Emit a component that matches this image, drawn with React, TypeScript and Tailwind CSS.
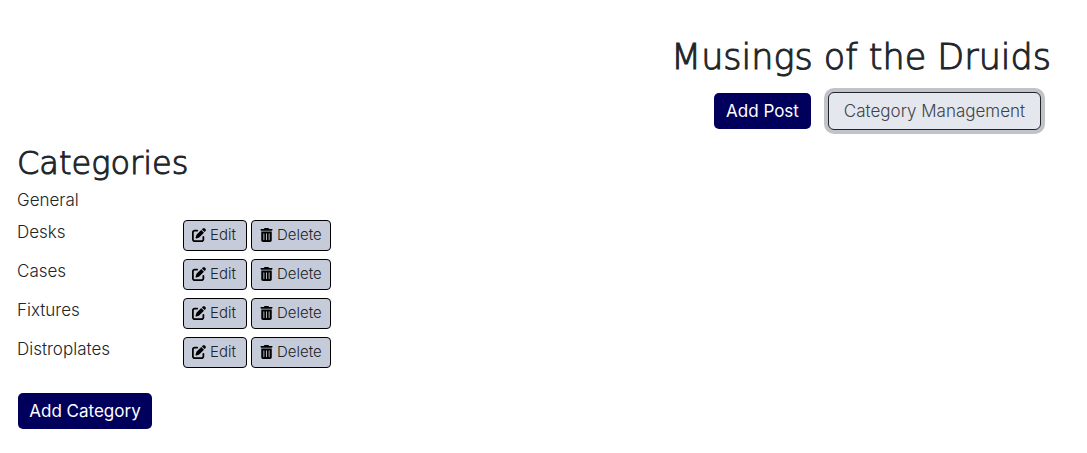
import { FaPenToSquare, FaTrashCan } from "react-icons/fa6";

const categories = ["Desks", "Cases", "Fixtures", "Distroplates"];

const heading =
  "font-['DejaVu_Sans','Inter',sans-serif] font-extralight text-[#212529] whitespace-nowrap [-webkit-text-stroke:1px_#212529]";
const primary = "h-9 rounded-[5px] bg-[#00005c] text-[17px] leading-6 text-white whitespace-nowrap";
const small =
  "flex h-[31px] items-center gap-1 rounded border border-black bg-[#c6cbda] pb-0.5 pl-2 text-[15px] leading-5 font-light text-[#212529]";

export default function App() {
  return (
    <div className="bg-white pt-[37px] pb-6 pl-[17px] font-['Inter',sans-serif] text-[#212529]">
      <header className="flex flex-col items-end pr-9">
        <h1 className={`${heading} text-[35px] leading-10`}>Musings of the Druids</h1>
        <nav className="mt-[15px] mr-2.5 flex items-center gap-[17px]">
          <button type="button" className={`${primary} w-[97px]`}>Add Post</button>
          <button
            type="button"
            className="h-[38px] w-[213px] rounded-md border border-[#212529] bg-[#e5e7ef] text-[17px] leading-6 font-light whitespace-nowrap text-[#3f4349] ring-4 ring-[#c0c3c7]"
          >
            Category Management
          </button>
        </nav>
      </header>
      <main>
        <h2 className={`${heading} mt-[15px] text-[32px] leading-9`}>Categories</h2>
        <p className="mt-[7px] text-[17px] leading-6 font-light">General</p>
        <ul className="mt-2 flex flex-col gap-2">
          {categories.map((name) => (
            <li key={name} className="flex items-start">
              <span className="w-[166px] text-[17px] leading-6 font-light">{name}</span>
              <div className="flex gap-1">
                <button type="button" aria-label={`Edit ${name}`} className={`${small} w-16`}>
                  <FaPenToSquare className="size-3.5 text-black" />
                  Edit
                </button>
                <button type="button" aria-label={`Delete ${name}`} className={`${small} w-20`}>
                  <FaTrashCan className="h-3.5 w-[13px] text-black" />
                  Delete
                </button>
              </div>
            </li>
          ))}
        </ul>
        <button type="button" className={`${primary} mt-[25px] ml-px w-[134px]`}>Add Category</button>
      </main>
    </div>
  );
}
